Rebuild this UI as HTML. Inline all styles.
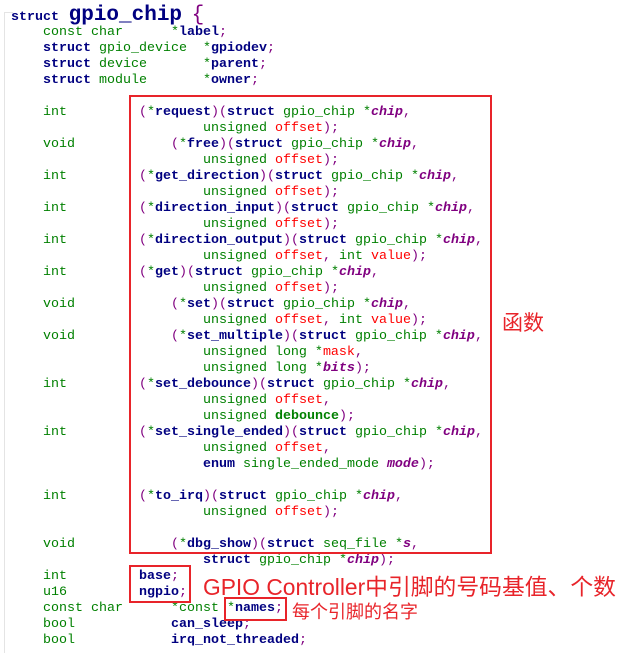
<!DOCTYPE html>
<html><head><meta charset="utf-8"><style>
body{margin:0;width:631px;height:652px;background:#fff;position:relative;overflow:hidden}
pre{position:absolute;left:11px;top:25px;margin:0;font-family:"Liberation Mono",monospace;font-size:13.33px;line-height:16px;color:#008000}
.k{color:#000080;font-weight:bold}
.p{color:#800080}
.r{color:#f00}
.i{color:#800080;font-weight:bold;font-style:italic}
.g{color:#008000;font-weight:bold}
.box{position:absolute;border:2px solid #e8242a;box-sizing:border-box}
.cn{position:absolute;color:#e8242a;font-family:"Liberation Sans","Noto Sans CJK SC",sans-serif;white-space:nowrap}
.edge{position:absolute;left:4px;top:12px;width:8px;height:640px;border-left:1px solid #e4e4e4;border-top:1px solid #e4e4e4}
</style></head><body>
<div class="edge"></div>
<div style="position:absolute;left:11px;top:4px;font-family:'Liberation Mono',monospace;white-space:nowrap;color:#000080;font-weight:bold"><span style="font-size:13.33px">struct</span> <span style="font-size:21px">gpio_chip</span> <span class="p" style="font-size:21px;font-weight:normal">{</span></div>
<pre>    const char      <span>*</span><span class="k">label</span><span class="p">;</span>
    <span class="k">struct</span> gpio_device  *<span class="k">gpiodev</span><span class="p">;</span>
    <span class="k">struct</span> device       *<span class="k">parent</span><span class="p">;</span>
    <span class="k">struct</span> module       *<span class="k">owner</span><span class="p">;</span>

    int         <span class="p">(</span>*<span class="k">request</span><span class="p">)(</span><span class="k">struct</span> gpio_chip *<span class="i">chip</span><span class="p">,</span>
                        unsigned <span class="r">offset</span><span class="p">);</span>
    void            <span class="p">(</span>*<span class="k">free</span><span class="p">)(</span><span class="k">struct</span> gpio_chip *<span class="i">chip</span><span class="p">,</span>
                        unsigned <span class="r">offset</span><span class="p">);</span>
    int         <span class="p">(</span>*<span class="k">get_direction</span><span class="p">)(</span><span class="k">struct</span> gpio_chip *<span class="i">chip</span><span class="p">,</span>
                        unsigned <span class="r">offset</span><span class="p">);</span>
    int         <span class="p">(</span>*<span class="k">direction_input</span><span class="p">)(</span><span class="k">struct</span> gpio_chip *<span class="i">chip</span><span class="p">,</span>
                        unsigned <span class="r">offset</span><span class="p">);</span>
    int         <span class="p">(</span>*<span class="k">direction_output</span><span class="p">)(</span><span class="k">struct</span> gpio_chip *<span class="i">chip</span><span class="p">,</span>
                        unsigned <span class="r">offset</span><span class="p">,</span> int <span class="r">value</span><span class="p">);</span>
    int         <span class="p">(</span>*<span class="k">get</span><span class="p">)(</span><span class="k">struct</span> gpio_chip *<span class="i">chip</span><span class="p">,</span>
                        unsigned <span class="r">offset</span><span class="p">);</span>
    void            <span class="p">(</span>*<span class="k">set</span><span class="p">)(</span><span class="k">struct</span> gpio_chip *<span class="i">chip</span><span class="p">,</span>
                        unsigned <span class="r">offset</span><span class="p">,</span> int <span class="r">value</span><span class="p">);</span>
    void            <span class="p">(</span>*<span class="k">set_multiple</span><span class="p">)(</span><span class="k">struct</span> gpio_chip *<span class="i">chip</span><span class="p">,</span>
                        unsigned long *<span class="r">mask</span><span class="p">,</span>
                        unsigned long *<span class="i">bits</span><span class="p">);</span>
    int         <span class="p">(</span>*<span class="k">set_debounce</span><span class="p">)(</span><span class="k">struct</span> gpio_chip *<span class="i">chip</span><span class="p">,</span>
                        unsigned <span class="r">offset</span><span class="p">,</span>
                        unsigned <span class="g">debounce</span><span class="p">);</span>
    int         <span class="p">(</span>*<span class="k">set_single_ended</span><span class="p">)(</span><span class="k">struct</span> gpio_chip *<span class="i">chip</span><span class="p">,</span>
                        unsigned <span class="r">offset</span><span class="p">,</span>
                        <span class="k">enum</span> single_ended_mode <span class="i">mode</span><span class="p">);</span>

    int         <span class="p">(</span>*<span class="k">to_irq</span><span class="p">)(</span><span class="k">struct</span> gpio_chip *<span class="i">chip</span><span class="p">,</span>
                        unsigned <span class="r">offset</span><span class="p">);</span>

    void            <span class="p">(</span>*<span class="k">dbg_show</span><span class="p">)(</span><span class="k">struct</span> seq_file *<span class="i">s</span><span class="p">,</span>
                        <span class="k">struct</span> gpio_chip *<span class="i">chip</span><span class="p">);</span>
    int         <span class="k">base</span><span class="p">;</span>
    u16         <span class="k">ngpio</span><span class="p">;</span>
    const char      *const *<span class="k">names</span><span class="p">;</span>
    bool            <span class="k">can_sleep</span><span class="p">;</span>
    bool            <span class="k">irq_not_threaded</span><span class="p">;</span></pre>
<div class="box" style="left:129px;top:95px;width:363px;height:459px"></div>
<div class="box" style="left:129px;top:565px;width:62px;height:38px"></div>
<div class="box" style="left:224px;top:597px;width:63px;height:24px"></div>
<div class="cn" style="left:502px;top:307px;font-size:21px">函数</div>
<div class="cn" style="left:203px;top:569px;font-size:22.8px">GPIO Controller中引脚的号码基值、个数</div>
<div class="cn" style="left:292px;top:598px;font-size:18px">每个引脚的名字</div>
</body></html>
